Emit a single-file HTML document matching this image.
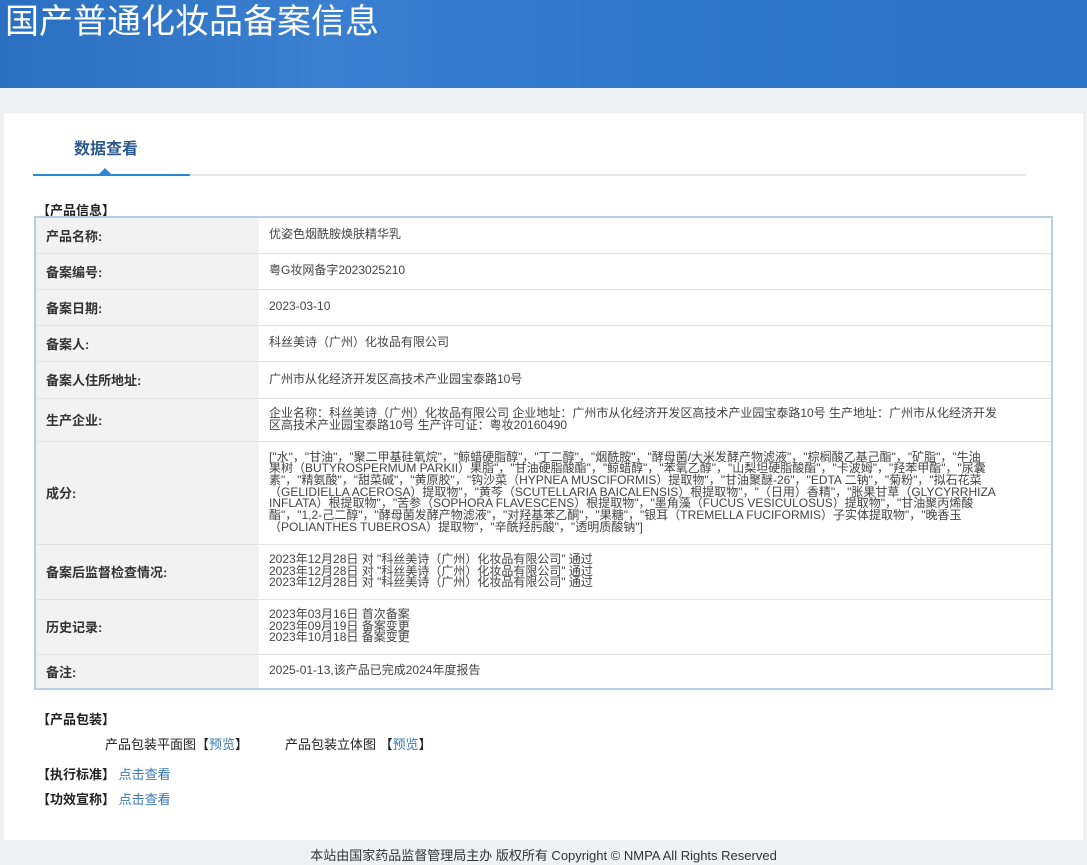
<!DOCTYPE html>
<html><head><meta charset="utf-8"><style>
*{margin:0;padding:0;box-sizing:border-box}
body{width:1087px;height:865px;background:#eef2f5;font-family:"Liberation Sans","Noto Sans CJK SC",sans-serif;color:#333;overflow:hidden;position:relative}
.hd{height:88px;background:linear-gradient(90deg,#2a6fc0 0%,#3a7fd0 30%,#2e78cc 60%,#2a72c4 100%);color:#fff;font-size:34px;padding:2px 0 0 5px;line-height:40px}
.panel{position:absolute;left:4px;top:113px;width:1079px;height:727px;background:#fff}
.tab{position:absolute;left:29px;top:26px;width:157px;height:37px;border-bottom:2px solid #2b86d3;padding-left:41px;font-weight:bold;font-size:16px;color:#2c5a8c;line-height:22px}
.tab:after{content:"";position:absolute;left:66px;bottom:0;border:6px solid transparent;border-bottom-color:#2b86d3;border-width:0 6px 6px}
.line{position:absolute;left:186px;top:61px;width:836px;height:2px;background:#e6e9ec}
.sec{position:absolute;font-size:13px;font-weight:bold;color:#222}
table{position:absolute;left:30px;top:103px;width:1019px;border-collapse:collapse;border:2px solid #b8cfe3;font-size:12px}
td{border-bottom:1px solid #e2e2e2;vertical-align:middle}
td.l{width:224px;background:#f2f2f2;font-weight:bold;font-size:13px;padding-left:10px;color:#333}
td.v{padding-left:10px;line-height:11.7px;color:#444}
.lk{color:#3a78b5;font-weight:normal}
.foot{position:absolute;top:845px;left:0;width:1087px;text-align:center;font-size:13px;color:#333}
</style></head><body>
<div class="hd">国产普通化妆品备案信息</div>
<div class="panel">
<div class="tab">数据查看</div><div class="line"></div>
<div class="sec" style="left:33px;top:87px">【产品信息】</div>
<table>
<tr style="height:36px"><td class="l">产品名称:</td><td class="v">优姿色烟酰胺焕肤精华乳</td></tr>
<tr style="height:36px"><td class="l">备案编号:</td><td class="v">粤G妆网备字2023025210</td></tr>
<tr style="height:36px"><td class="l">备案日期:</td><td class="v">2023-03-10</td></tr>
<tr style="height:36px"><td class="l">备案人:</td><td class="v">科丝美诗（广州）化妆品有限公司</td></tr>
<tr style="height:37px"><td class="l">备案人住所地址:</td><td class="v">广州市从化经济开发区高技术产业园宝泰路10号</td></tr>
<tr style="height:43px"><td class="l">生产企业:</td><td class="v">企业名称：科丝美诗（广州）化妆品有限公司 企业地址：广州市从化经济开发区高技术产业园宝泰路10号 生产地址：广州市从化经济开发<br>区高技术产业园宝泰路10号 生产许可证：粤妆20160490</td></tr>
<tr style="height:103px"><td class="l">成分:</td><td class="v">["水"，"甘油"，"聚二甲基硅氧烷"，"鲸蜡硬脂醇"，"丁二醇"，"烟酰胺"，"酵母菌/大米发酵产物滤液"，"棕榈酸乙基己酯"，"矿脂"，"牛油<br>果树（BUTYROSPERMUM PARKII）果脂"，"甘油硬脂酸酯"，"鲸蜡醇"，"苯氧乙醇"，"山梨坦硬脂酸酯"，"卡波姆"，"羟苯甲酯"，"尿囊<br>素"，"精氨酸"，"甜菜碱"，"黄原胶"，"钩沙菜（HYPNEA MUSCIFORMIS）提取物"，"甘油聚醚-26"，"EDTA 二钠"，"菊粉"，"拟石花菜<br>（GELIDIELLA ACEROSA）提取物"，"黄芩（SCUTELLARIA BAICALENSIS）根提取物"，"（日用）香精"，"胀果甘草（GLYCYRRHIZA<br>INFLATA）根提取物"，"苦参（SOPHORA FLAVESCENS）根提取物"，"墨角藻（FUCUS VESICULOSUS）提取物"，"甘油聚丙烯酸<br>酯"，"1,2-己二醇"，"酵母菌发酵产物滤液"，"对羟基苯乙酮"，"果糖"，"银耳（TREMELLA FUCIFORMIS）子实体提取物"，"晚香玉<br>（POLIANTHES TUBEROSA）提取物"，"辛酰羟肟酸"，"透明质酸钠"]</td></tr>
<tr style="height:55px"><td class="l">备案后监督检查情况:</td><td class="v">2023年12月28日 对 "科丝美诗（广州）化妆品有限公司" 通过<br>2023年12月28日 对 "科丝美诗（广州）化妆品有限公司" 通过<br>2023年12月28日 对 "科丝美诗（广州）化妆品有限公司" 通过</td></tr>
<tr style="height:55px"><td class="l">历史记录:</td><td class="v">2023年03月16日 首次备案<br>2023年09月19日 备案变更<br>2023年10月18日 备案变更</td></tr>
<tr style="height:35px"><td class="l" style="border-bottom:0">备注:</td><td class="v" style="border-bottom:0">2025-01-13,该产品已完成2024年度报告</td></tr>
</table>
<div class="sec" style="left:33px;top:596px">【产品包装】</div>
<div style="position:absolute;left:101px;top:621px;font-size:13px;color:#222">产品包装平面图【<span class="lk">预览</span>】</div>
<div style="position:absolute;left:281px;top:621px;font-size:13px;color:#222">产品包装立体图 【<span class="lk">预览</span>】</div>
<div class="sec" style="left:33px;top:651px">【执行标准】 <span class="lk">点击查看</span></div>
<div class="sec" style="left:33px;top:676px">【功效宣称】 <span class="lk">点击查看</span></div>
</div>
<div class="foot">本站由国家药品监督管理局主办 版权所有 Copyright © NMPA All Rights Reserved</div>
</body></html>
